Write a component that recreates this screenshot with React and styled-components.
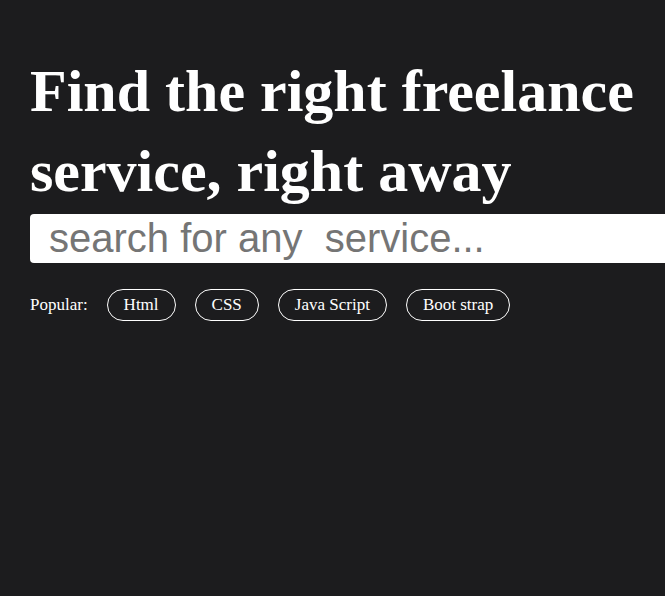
import React from "react";
import styled, { createGlobalStyle } from "styled-components";

const Global = createGlobalStyle`
  html, body {
    margin: 0;
    padding: 0;
    background: #1c1c1e;
  }
  body {
    font-family: "Liberation Serif", "Times New Roman", serif;
    color: #ffffff;
    min-height: 596px;
  }
`;

const Hero = styled.section`
  padding: 51px 0 0 30px;
  display: flex;
  flex-direction: column;
  overflow: clip;
`;

const Title = styled.h1`
  margin: 0;
  font-family: "Liberation Serif", "Times New Roman", serif;
  font-weight: 700;
  font-size: 60px;
  line-height: 80px;
  color: #ffffff;
  white-space: nowrap;
`;

const SearchInput = styled.input`
  margin-top: 3px;
  box-sizing: border-box;
  width: 700px;
  flex-shrink: 0;
  height: 49px;
  border: none;
  outline: none;
  border-radius: 4px 0 0 4px;
  background: #ffffff;
  padding: 0 0 0 19px;
  font-family: "Liberation Sans", Arial, sans-serif;
  font-size: 40px;
  color: #222;
  caret-color: #000;
  &::placeholder {
    color: #757575;
  }
`;

const PopularRow = styled.div`
  margin-top: 26px;
  display: flex;
  align-items: center;
  gap: 19px;
`;

const Label = styled.span`
  font-size: 17px;
  color: #ffffff;
`;

const Pill = styled.button`
  box-sizing: border-box;
  height: 32px;
  padding: 0 16px;
  border: 1px solid #ffffff;
  border-radius: 16px;
  background: transparent;
  color: #ffffff;
  font-family: "Liberation Serif", "Times New Roman", serif;
  font-size: 17px;
  cursor: pointer;
`;

const tags = ["Html", "CSS", "Java Script", "Boot strap"];

export default function App() {
  return (
    <>
      <Global />
      <Hero>
        <Title>
          Find the right freelance
          <br />
          service, right away
        </Title>
        <SearchInput autoFocus placeholder="search for any  service..." />
        <PopularRow>
          <Label>Popular:</Label>
          {tags.map((t) => (
            <Pill key={t}>{t}</Pill>
          ))}
        </PopularRow>
      </Hero>
    </>
  );
}
